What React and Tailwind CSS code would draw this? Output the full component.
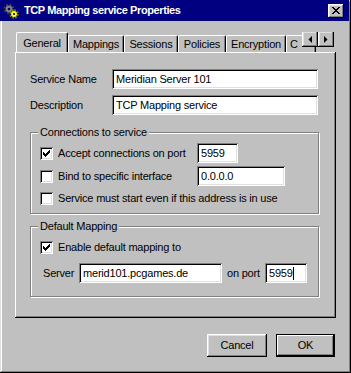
import React from 'react';

const raised = "shadow-[inset_-1px_-1px_0_#000,inset_1px_1px_0_#fff,inset_-2px_-2px_0_#808080,inset_2px_2px_0_#dfdfdf]";
const sunken = "shadow-[inset_1px_1px_0_#808080,inset_-1px_-1px_0_#fff,inset_2px_2px_0_#000,inset_-2px_-2px_0_#dfdfdf]";

function Gears() {
    return (
        <svg width="16" height="16" viewBox="0 0 16 16">
            <circle cx="6" cy="6" r="4.2" fill="none" stroke="#404040" strokeWidth="2.6" strokeDasharray="1.7 1.6"/>
            <circle cx="6" cy="6" r="3.4" fill="#808080"/>
            <circle cx="6" cy="6" r="1.3" fill="#000080"/>
            <circle cx="11" cy="11" r="3.6" fill="none" stroke="#808000" strokeWidth="2.2" strokeDasharray="1.5 1.3"/>
            <circle cx="11" cy="11" r="2.9" fill="#ffff00"/>
            <circle cx="11" cy="11" r="1.1" fill="#000080"/>
        </svg>
    );
}

function CheckMark() {
    return (
        <svg width="7" height="7" viewBox="0 0 7 7" shapeRendering="crispEdges">
            <path fill="#000" d="M6 0h1v1H6zM5 1h2v1H5zM0 2h1v1H0zM4 2h3v1H4zM0 3h2v1H0zM3 3h3v1H3zM0 4h5v1H0zM1 5h3v1H1zM2 6h1v1H2z"/>
        </svg>
    );
}

function Check({ checked, label, className }) {
    return (
        <div className={`flex items-center ${className || ''}`}>
            <div className={`w-[13px] h-[13px] bg-white ${sunken} flex items-center justify-center shrink-0`}>
                {checked && <CheckMark/>}
            </div>
            <span className="ml-[5px] whitespace-nowrap">{label}</span>
        </div>
    );
}

function Field({ value, className, caret }) {
    return (
        <div className={`h-[20px] bg-white ${sunken} flex items-center pl-[4px] whitespace-nowrap overflow-hidden ${className}`}>
            <span>{value}</span>
            {caret && <span className="w-[1px] h-[13px] bg-black"></span>}
        </div>
    );
}

function Group({ title, className, children }) {
    return (
        <div className={`relative w-[289px] border border-[#808080] shadow-[1px_1px_0_#fff,inset_1px_1px_0_#fff] ${className}`}>
            <span className="absolute -top-[8px] left-[7px] px-[2px] bg-[#c0c0c0] leading-[14px]">{title}</span>
            {children}
        </div>
    );
}

function Tab({ label, className }) {
    return (
        <div className={`h-[17px] border-l border-t border-white border-r border-r-black rounded-t-[2px] shadow-[inset_-1px_0_0_#808080] flex items-center justify-center shrink-0 ${className}`}>
            {label}
        </div>
    );
}

function App() {
    return (
        <div className="w-[351px] h-[373px] bg-[#c0c0c0] text-[11px] tracking-[-0.2px] text-black font-['Liberation_Sans',Arial,sans-serif] shadow-[inset_-1px_-1px_0_#000,inset_1px_1px_0_#dfdfdf,inset_-2px_-2px_0_#808080,inset_2px_2px_0_#fff] overflow-hidden">
            <div className="w-[349px] h-[21px] bg-[#000080] flex items-center">
                <div className="ml-[3px]"><Gears/></div>
                <span className="ml-[5px] text-white font-bold text-[11px] tracking-[-0.4px]">TCP Mapping service Properties</span>
                <div className={`ml-auto mr-[5px] w-[16px] h-[14px] bg-[#c0c0c0] ${raised} flex items-center justify-center`}>
                    <svg width="8" height="7" viewBox="0 0 8 7" shapeRendering="crispEdges">
                        <path fill="#000" d="M0 0h2v1H0zM6 0h2v1H6zM1 1h2v1H1zM5 1h2v1H5zM2 2h4v1H2zM3 3h2v1H3zM2 4h4v1H2zM1 5h2v1H1zM5 5h2v1H5zM0 6h2v1H0zM6 6h2v1H6z"/>
                    </svg>
                </div>
            </div>

            <div className="relative mt-[11px] ml-[16px] w-[320px] h-[20px] flex items-end overflow-hidden">
                <div className="relative z-10 w-[52px] h-[21px] -mb-[1px] bg-[#c0c0c0] border-l border-t border-white border-r border-r-black rounded-t-[2px] shadow-[inset_-1px_0_0_#808080] flex justify-center pt-[2px] shrink-0">
                    General
                </div>
                <Tab label="Mappings" className="w-[56px]"/>
                <Tab label="Sessions" className="w-[54px]"/>
                <Tab label="Policies" className="w-[48px]"/>
                <Tab label="Encryption" className="w-[60px]"/>
                <Tab label="C" className="w-[30px] justify-start pl-[3px]"/>
                <div className="absolute right-[2px] top-[-1px] flex">
                    <div className={`w-[16px] h-[16px] bg-[#c0c0c0] ${raised} flex items-center justify-center`}>
                        <svg width="4" height="7" viewBox="0 0 4 7"><path d="M4 0v7L0.5 3.5z" fill="#000"/></svg>
                    </div>
                    <div className={`w-[16px] h-[16px] bg-[#c0c0c0] ${raised} flex items-center justify-center`}>
                        <svg width="4" height="7" viewBox="0 0 4 7"><path d="M0 0v7L3.5 3.5z" fill="#000"/></svg>
                    </div>
                </div>
            </div>

            <div className="ml-[15px] w-[321px] h-[266px] shadow-[inset_-1px_-1px_0_#000,inset_1px_1px_0_#fff,inset_-2px_-2px_0_#808080] pt-[17px] pl-[15px]">
                <div className="flex items-center h-[20px]">
                    <span className="w-[82px]">Service Name</span>
                    <Field value="Meridian Server 101" className="w-[206px]"/>
                </div>
                <div className="flex items-center h-[20px] mt-[6px]">
                    <span className="w-[82px]">Description</span>
                    <Field value="TCP Mapping service" className="w-[206px]"/>
                </div>

                <Group title="Connections to service" className="mt-[17px] h-[82px] pt-[10px] pl-[9px]">
                    <div className="flex items-center h-[20px]">
                        <Check checked label="Accept connections on port" className="w-[157px]"/>
                        <Field value="5959" className="w-[41px]"/>
                    </div>
                    <div className="flex items-center h-[20px] mt-[3px]">
                        <Check label="Bind to specific interface" className="w-[157px]"/>
                        <Field value="0.0.0.0" className="w-[88px]"/>
                    </div>
                    <div className="flex items-center h-[20px] mt-[2px]">
                        <Check label="Service must start even if this address is in use"/>
                    </div>
                </Group>

                <Group title="Default Mapping" className="mt-[12px] h-[71px] pt-[10px] pl-[9px]">
                    <div className="flex items-center h-[20px]">
                        <Check checked label="Enable default mapping to"/>
                    </div>
                    <div className="flex items-center h-[20px] mt-[6px]">
                        <span className="w-[39px] pl-[3px]">Server</span>
                        <Field value="merid101.pcgames.de" className="w-[143px]"/>
                        <span className="w-[43px] pl-[5px]">on port</span>
                        <Field value="5959" caret className="w-[42px]"/>
                    </div>
                </Group>
            </div>

            <div className="flex justify-end mt-[16px] pr-[16px] gap-[9px]">
                <button type="button" className={`w-[60px] h-[23px] bg-[#c0c0c0] ${raised} flex items-center justify-center`}>
                    Cancel
                </button>
                <button type="button" className="w-[59px] h-[23px] bg-[#c0c0c0] border border-black shadow-[inset_-1px_-1px_0_#000,inset_1px_1px_0_#fff,inset_-2px_-2px_0_#808080] flex items-center justify-center">
                    OK
                </button>
            </div>
        </div>
    );
}

export default App;
